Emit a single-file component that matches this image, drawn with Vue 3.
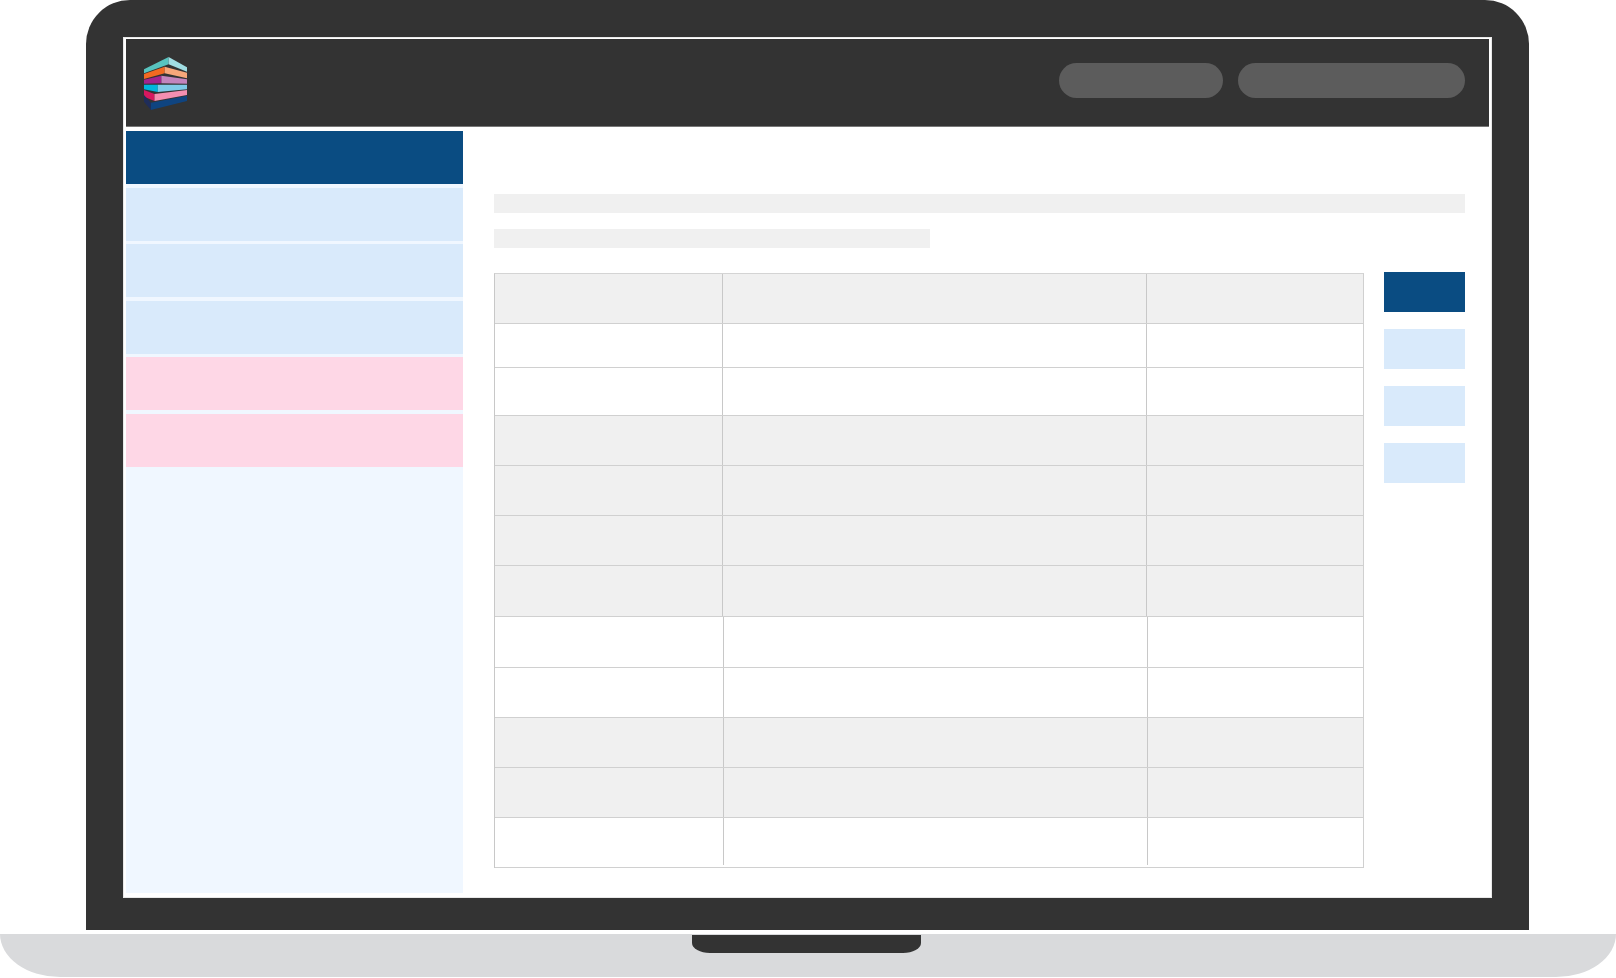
<template>
  <div class="page">
    <div class="laptop">
      <div class="screen">
        <header class="topbar">
          <svg class="logo" viewBox="72 81 131 159" width="43" height="53" preserveAspectRatio="none">
            <polygon points="72,118 147,81 147,103 72,130" fill="#58c4bf" />
            <polygon points="147,81 203,112 203,125 147,103" fill="#a0dde2" />
            <polygon points="72,132 135,110 135,130 72,147" fill="#f26a21" />
            <polygon points="135,110 203,128 203,145 135,130" fill="#f7a77a" />
            <polygon points="72,149 125,137 125,160 72,161" fill="#a3238e" />
            <polygon points="125,137 203,148 203,161 125,160" fill="#c384bd" />
            <polygon points="72,164 114,164 114,186 72,178" fill="#00b5dd" />
            <polygon points="114,164 203,164 203,178 114,186" fill="#7fcbe8" />
            <polygon points="72,180 104,192 104,213 72,200" fill="#d6185f" />
            <polygon points="104,192 203,180 203,195 104,213" fill="#f48fb1" />
            <polygon points="72,195 93,218 93,240 72,215" fill="#1f2d5a" />
            <polygon points="93,218 203,197 203,213 93,240" fill="#0f4480" />
          </svg>
          <div class="pills">
            <span class="pill pill-short"></span>
            <span class="pill pill-long"></span>
          </div>
        </header>

        <div class="main">
          <aside class="sidebar">
            <div
              v-for="(item, i) in menu"
              :key="i"
              class="menu-item"
              :class="item"
            ></div>
          </aside>

          <section class="content">
            <div class="line"></div>
            <div class="line line-short"></div>

            <div class="body">
              <div class="grid">
                <div
                  v-for="(row, i) in rows"
                  :key="i"
                  class="row"
                  :class="{ grey: row.grey, shifted: i > 6 }"
                  :style="{ height: row.h + 'px' }"
                >
                  <div class="cell"></div>
                  <div class="cell"></div>
                  <div class="cell"></div>
                </div>
              </div>

              <div class="actions">
                <div class="action active"></div>
                <div class="action"></div>
                <div class="action"></div>
                <div class="action"></div>
              </div>
            </div>
          </section>
        </div>
      </div>
    </div>

    <div class="base">
      <div class="notch"></div>
    </div>
  </div>
</template>

<script setup>
const menu = ['active', 'blue', 'blue', 'blue', 'pink', 'pink']

// alçades mesurades de cada fila, incloent la línia inferior
const rows = [
  { h: 50, grey: true },
  { h: 44, grey: false },
  { h: 48, grey: false },
  { h: 50, grey: true },
  { h: 50, grey: true },
  { h: 50, grey: true },
  { h: 51, grey: true },
  { h: 51, grey: false },
  { h: 50, grey: false },
  { h: 50, grey: true },
  { h: 50, grey: true },
  { h: 50, grey: false },
]
</script>

<style scoped>
.page {
  width: 1616px;
  height: 978px;
  overflow: hidden;
  background: #fff;
}

.laptop {
  box-sizing: border-box;
  width: 1443px;
  height: 930px;
  margin-left: 86px;
  padding: 37px 37px 32px;
  background: #333;
  border-radius: 44px 44px 0 0;
}

.screen {
  box-sizing: border-box;
  height: 861px;
  padding: 1px 2px;
  background: #fff;
  border: 1px solid #e8e8e8;
}

.topbar {
  box-sizing: border-box;
  display: flex;
  align-items: center;
  justify-content: space-between;
  height: 88px;
  padding: 2px 24px 0 18px;
  background: #333;
  border-bottom: 1px solid #777;
}

.pills {
  display: flex;
  gap: 15px;
  margin-bottom: 6px;
}

.pill {
  height: 35px;
  background: #5c5c5c;
  border-radius: 18px;
}

.pill-short {
  width: 164px;
}

.pill-long {
  width: 227px;
}

.main {
  display: flex;
}

.sidebar {
  display: flex;
  flex-direction: column;
  gap: 3.5px;
  width: 337px;
  height: 762px;
  margin-top: 4px;
  background: #f0f7ff;
}

.menu-item {
  height: 53px;
}

.menu-item.active {
  background: #0a4c82;
}

.menu-item.blue {
  background: #d9eafb;
}

.menu-item.pink {
  background: #fed7e6;
}

.content {
  flex: 1;
  padding: 67px 24px 0 31px;
}

.line {
  height: 19px;
  background: #f0f0f0;
}

.line-short {
  width: 436px;
  margin-top: 16px;
}

.body {
  display: flex;
  justify-content: space-between;
  margin-top: 24px;
}

.grid {
  width: 868px;
  margin-top: 1px;
  border-top: 1px solid #d4d4d4;
  border-left: 1px solid #c8c8c8;
  border-right: 1px solid #d0d0d0;
}

.row {
  box-sizing: border-box;
  display: grid;
  grid-template-columns: 228px 424px 1fr;
  border-bottom: 1px solid #d0d0d0;
}

.row.shifted {
  grid-template-columns: 229px 424px 1fr;
}

.row:last-child .cell {
  margin-bottom: 2px;
}

.row.grey {
  background: #f0f0f0;
}

.cell {
  border-right: 1px solid #c8c8c8;
}

.cell:last-child {
  border-right: 0;
}

.actions {
  display: flex;
  flex-direction: column;
  gap: 17.5px;
  width: 81px;
}

.action {
  height: 39.5px;
  background: #d9eafb;
}

.action.active {
  background: #0a4c82;
}

.base {
  box-sizing: border-box;
  height: 43px;
  margin-top: 4px;
  padding: 1px 0 0 692px;
  background: #d9dadc;
  border-radius: 0 0 60px 60px / 0 0 43px 43px;
}

.notch {
  width: 229px;
  height: 18px;
  background: #333;
  border-radius: 0 0 18px 18px / 0 0 10px 10px;
}
</style>

<style>
html,
body {
  margin: 0;
  background: #fff;
}
</style>
